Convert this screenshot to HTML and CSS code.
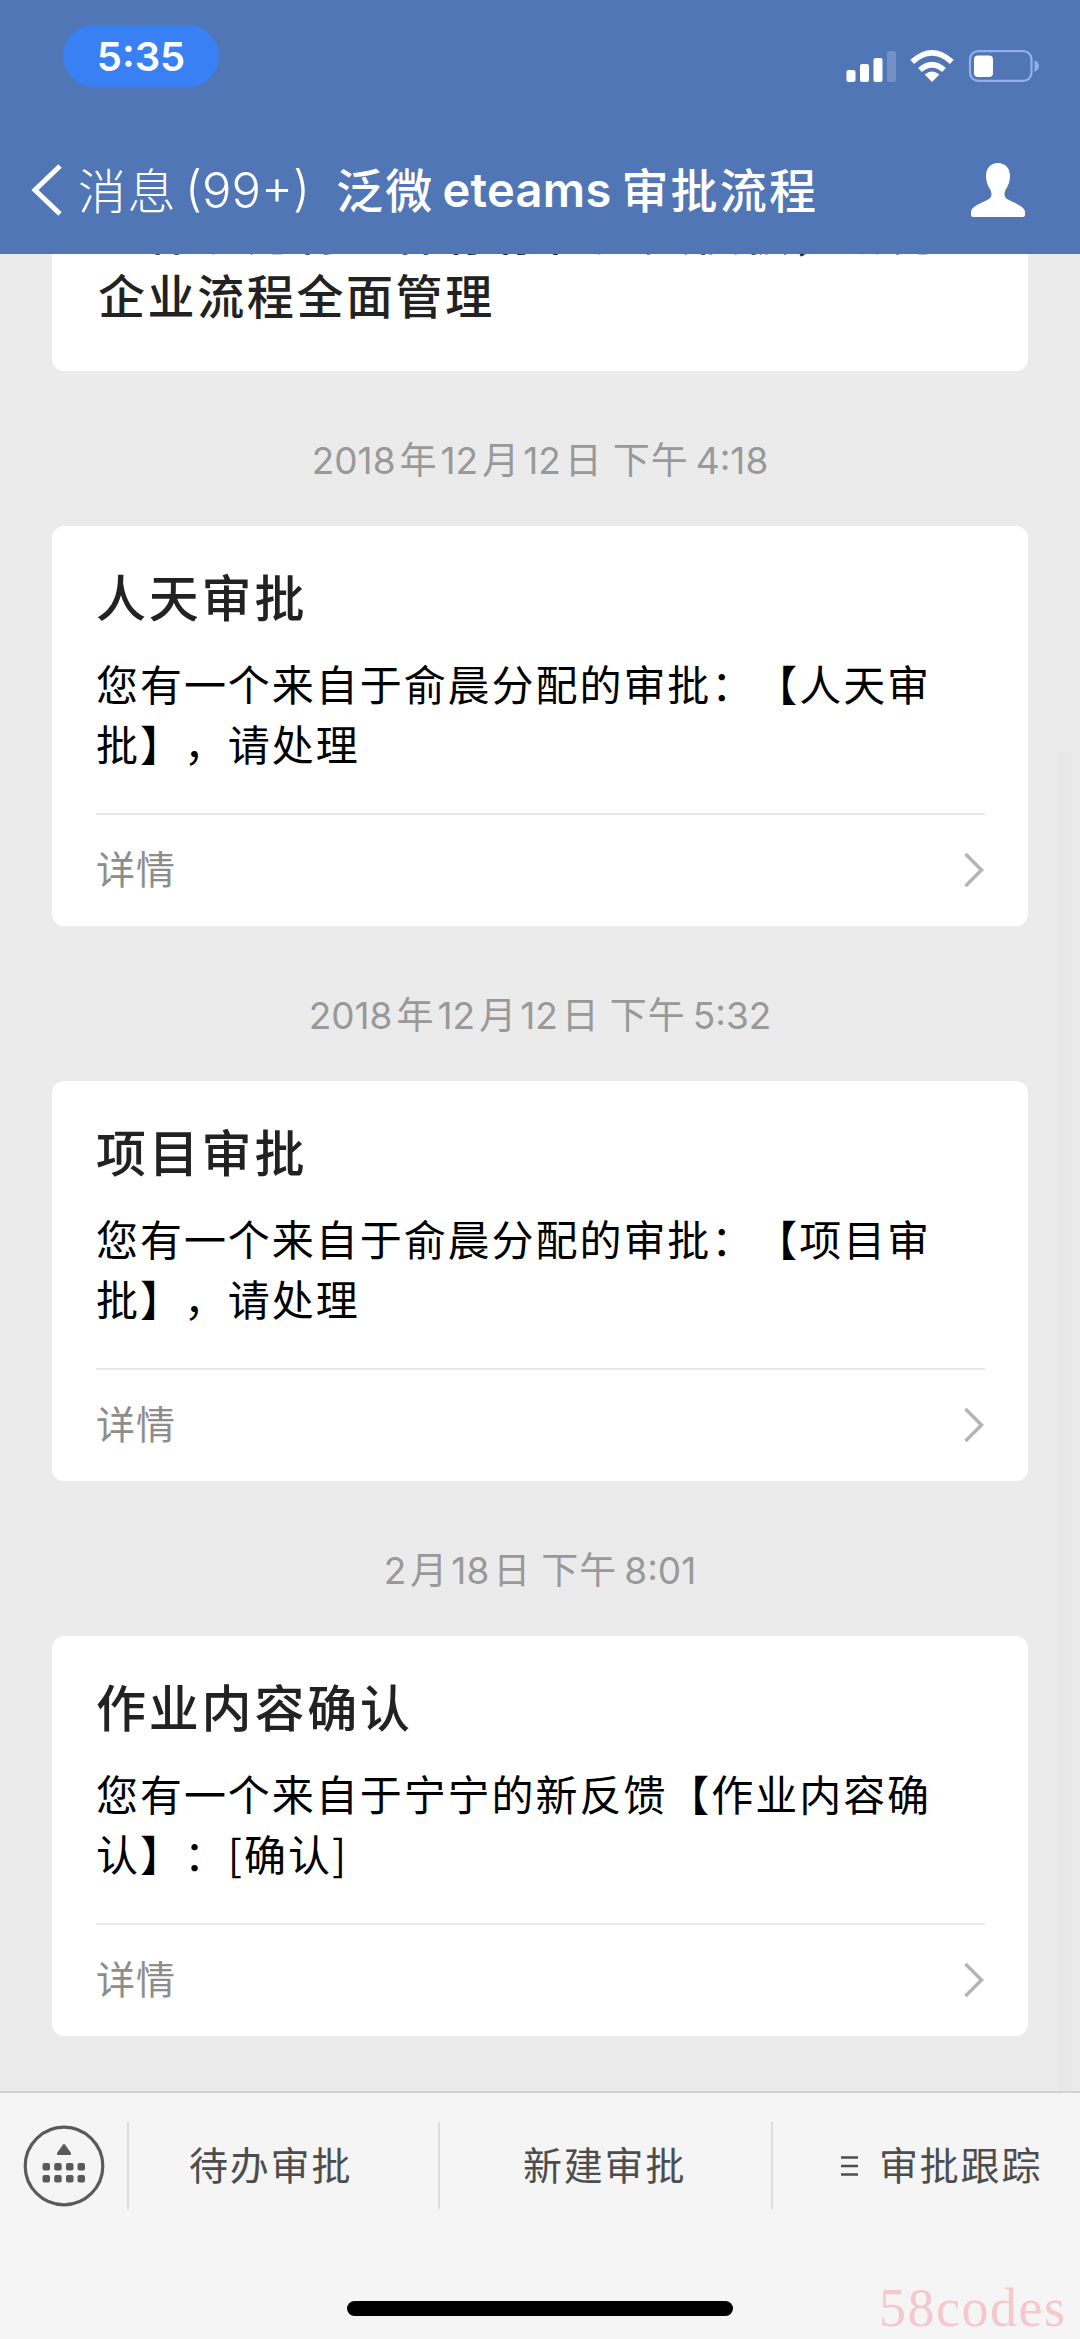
FILE: index.html
```html
<!DOCTYPE html>
<html lang="zh-CN">
<head>
<meta charset="utf-8">
<title>泛微eteams审批流程</title>
<link rel="stylesheet" href="styles.css">
</head>
<body>
<div class="screen">
  <header class="header">
    <div class="status">
      <div class="clock">5:35</div>
      <svg class="status-icons" width="196" height="36" viewBox="0 0 196 36">
        <g fill="#fff">
          <rect x="2.500" y="22" width="9" height="12" rx="2"/>
          <rect x="16" y="16" width="9" height="18" rx="2"/>
          <rect x="29.500" y="10" width="9" height="24" rx="2"/>
          <rect x="43" y="3" width="9" height="31" rx="2" opacity=".2"/>
          <path d="M88 34 L80.700 26.500 Q88 20.500 95.300 26.500 Z"/>
        </g>
        <g fill="none" stroke="#fff" stroke-width="5.600">
          <path d="M76 22 Q88 11.500 100 22"/>
          <path d="M68.200 13.800 Q88 -4 107.800 13.800"/>
        </g>
        <rect x="126" y="3.200" width="61.500" height="29.600" rx="8" fill="none" stroke="#8fb0ea" stroke-width="2.200"/>
        <rect x="130" y="7.500" width="19" height="21.500" rx="4" fill="#fff"/>
        <path d="M190.500 12 Q195 14.500 195 18 Q195 21.500 190.500 24 Z" fill="#8fb0ea"/>
      </svg>
    </div>
    <nav class="nav">
      <svg class="back" width="34" height="54" viewBox="0 0 34 54"><path d="M30 3 L5 27 L30 51" fill="none" stroke="#fff" stroke-width="5"/></svg>
      <span class="back-label">消息</span><span class="back-count">(99+)</span>
      <h1 class="title"><span class="title-head">泛微</span><span class="title-latin">eteams</span><span>审批流程</span></h1>
      <svg class="profile" width="56" height="56" viewBox="0 0 56 56"><path fill="#fff" d="M28 1 C35 1 40 6 40 14 C40 20 38 24 35.500 28 C34 31 34 35 37 37 C42 40 50 42.500 53.500 46.500 Q55 48 55 50 V53 Q55 55 53 55 H3 Q1 55 1 53 V50 Q1 48 2.500 46.500 C6 42.500 14 40 19 37 C22 35 22 31 20.500 28 C18 24 16 20 16 14 C16 6 21 1 28 1 Z"/></svg>
    </nav>
  </header>

  <main class="feed">
    <article class="card card-cut"><p>工作流运行一件存存在免费模板，助力<br>企业流程全面管理</p></article>

    <time class="stamp"><span>2018</span><span>年</span><span>12</span><span>月</span><span>12</span><span>日</span><span class="pm">下午</span><span>4:18</span></time>
    <article class="card">
      <h2 class="card-title">人天审批</h2>
      <p class="card-body">您有一个来自于俞晨分配的审批：【人天审<br>批】，请处理</p>
      <a class="more"><span>详情</span><svg width="22" height="38" viewBox="0 0 22 38"><path d="M2.500 3 L18.500 19 L2.500 35" fill="none" stroke="#b4b4b4" stroke-width="3.500"/></svg></a>
    </article>

    <time class="stamp"><span>2018</span><span>年</span><span>12</span><span>月</span><span>12</span><span>日</span><span class="pm">下午</span><span>5:32</span></time>
    <article class="card">
      <h2 class="card-title">项目审批</h2>
      <p class="card-body">您有一个来自于俞晨分配的审批：【项目审<br>批】，请处理</p>
      <a class="more"><span>详情</span><svg width="22" height="38" viewBox="0 0 22 38"><path d="M2.500 3 L18.500 19 L2.500 35" fill="none" stroke="#b4b4b4" stroke-width="3.500"/></svg></a>
    </article>

    <time class="stamp"><span>2</span><span>月</span><span>18</span><span>日</span><span class="pm">下午</span><span>8:01</span></time>
    <article class="card">
      <h2 class="card-title">作业内容确认</h2>
      <p class="card-body">您有一个来自于宁宁的新反馈【作业内容确<br>认】：[确认]</p>
      <a class="more"><span>详情</span><svg width="22" height="38" viewBox="0 0 22 38"><path d="M2.500 3 L18.500 19 L2.500 35" fill="none" stroke="#b4b4b4" stroke-width="3.500"/></svg></a>
    </article>
    <div class="scrollbar"></div>
  </main>

  <footer class="footer">
    <div class="menu">
      <div class="keys">
        <svg width="82" height="82" viewBox="0 0 82 82">
          <circle cx="41" cy="41" r="38.800" fill="none" stroke="#5a5a5a" stroke-width="3.200"/>
          <g fill="#5a5a5a">
            <path d="M40 19.500 Q41 18.500 42 19.500 L48 28 Q48.500 30 47 30 H35 Q33.500 30 34 28 Z"/>
            <rect x="19.500" y="38" width="7.500" height="7.500" rx="2"/><rect x="31.200" y="38" width="7.500" height="7.500" rx="2"/><rect x="43" y="38" width="7.500" height="7.500" rx="2"/><rect x="54.500" y="38" width="7.500" height="7.500" rx="2"/>
            <rect x="19.500" y="50" width="7.500" height="7.500" rx="2"/><rect x="31.200" y="50" width="7.500" height="7.500" rx="2"/><rect x="43" y="50" width="7.500" height="7.500" rx="2"/><rect x="54.500" y="50" width="7.500" height="7.500" rx="2"/>
          </g>
        </svg>
      </div>
      <div class="tab tab-a"><span>待办审批</span></div>
      <div class="tab tab-b"><span>新建审批</span></div>
      <div class="tab tab-c"><svg width="18" height="22" viewBox="0 0 18 22"><path d="M0 2.500 H17 M0 11 H17 M0 19.500 H17" stroke="#4d4d4d" stroke-width="2.600"/></svg><span>审批跟踪</span></div>
    </div>
    <div class="home"></div>
    <div class="watermark">58codes</div>
  </footer>
</div>
</body>
</html>
```

FILE: styles.css
```css
* { box-sizing: border-box; margin: 0; padding: 0; }
body { background: #ebebeb; font-family: "Inter", "Noto Sans CJK SC", sans-serif; text-spacing-trim: space-all; }
.screen { width: 1080px; height: 2339px; display: flex; flex-direction: column; overflow: hidden; }

.header { height: 254px; flex: none; background: #5176b6; color: #fff; position: relative; z-index: 1; }
.status { height: 127px; display: flex; justify-content: space-between; padding: 25px 40px 0 63px; }
.clock { width: 156px; height: 62px; border-radius: 31px; background: #3880f4; font-size: 40px; font-weight: 600; line-height: 63px; text-align: center; }
.status-icons { margin-top: 23px; }
.nav { height: 126px; display: flex; align-items: center; padding: 0 54px 0 30px; white-space: nowrap; line-height: 56px; }
.back { flex: none; margin-right: 14px; }
.back-label { width: 107px; padding-bottom: 4px; font-size: 48px; font-weight: 300; letter-spacing: 1.500px; font-family: "Noto Sans CJK SC", sans-serif; }
.back-count { width: 151px; padding-top: 2px; font-size: 49px; font-weight: 300; }
.title { flex: 1; display: flex; align-items: center; padding-bottom: 4px; font-family: "Noto Sans CJK SC", sans-serif; font-size: 47px; font-weight: 500; letter-spacing: 2.200px; }
.title-latin { width: 187px; padding: 4px 0 0 8px; font-family: "Inter", sans-serif; font-size: 47px; font-weight: 600; letter-spacing: .300px; }
.profile { flex: none; }

.feed { flex: 1; min-height: 0; position: relative; display: flex; flex-direction: column; padding: 0 52px 0 52px; }
.card { height: 400px; flex: none; background: #fff; border-radius: 12px; padding: 0 43px 0 44px; }
.card-cut { height: 117px; border-radius: 0 0 12px 12px; display: flex; align-items: flex-end; padding: 0 0 45px 46px; color: #222; font-family: "Noto Sans CJK SC", sans-serif; font-size: 47px; font-weight: 500; letter-spacing: 2.600px; line-height: 64px; white-space: nowrap; }
.stamp { height: 155px; flex: none; display: flex; align-items: center; justify-content: center; gap: 4px; color: #999; font-size: 37px; padding-top: 25px; line-height: 50px; }
.pm { margin: 0 3px 0 7px; letter-spacing: 1px; }
.card-title { padding-top: 39px; height: 127px; font-size: 50px; line-height: 68px; font-weight: 500; letter-spacing: 2.800px; color: #222; }
.card-body { height: 160px; font-family: "Noto Sans CJK SC", sans-serif; font-size: 42px; line-height: 60px; letter-spacing: 1.950px; color: #000; white-space: nowrap; }
.more { height: 111px; border-top: 2px solid #e8e8e8; display: flex; align-items: center; justify-content: space-between; font-size: 39px; color: #8d8d8d; letter-spacing: 1px; }
.more span { padding-bottom: 6px; }
.scrollbar { position: absolute; left: 1059px; top: 498px; width: 13px; bottom: 0; background: #e7e7e7; }

.footer { position: relative; height: 248px; flex: none; background: #f5f5f5; border-top: 2px solid #d2d2d2; }
.menu { display: flex; height: 87px; margin-top: 29px; color: #4d4d4d; font-size: 39px; letter-spacing: 1.800px; }
.keys { width: 127px; padding: 3px 0 0 22.500px; }
.tab { display: flex; align-items: center; border-left: 2px solid #dcdcdc; }
.tab span { padding-bottom: 5px; }
.tab-a { width: 311px; padding-left: 60px; }
.tab-b { width: 333px; padding-left: 83px; }
.tab-c { width: 309px; padding-left: 68px; gap: 20px; }
.home { position: absolute; left: 347px; top: 208px; width: 386px; height: 15px; border-radius: 8px; background: #000; }
.watermark { position: absolute; left: 879px; top: 184px; font: 54px/62px "Liberation Serif", serif; letter-spacing: 1.500px; color: #f4c8cc; }
```
